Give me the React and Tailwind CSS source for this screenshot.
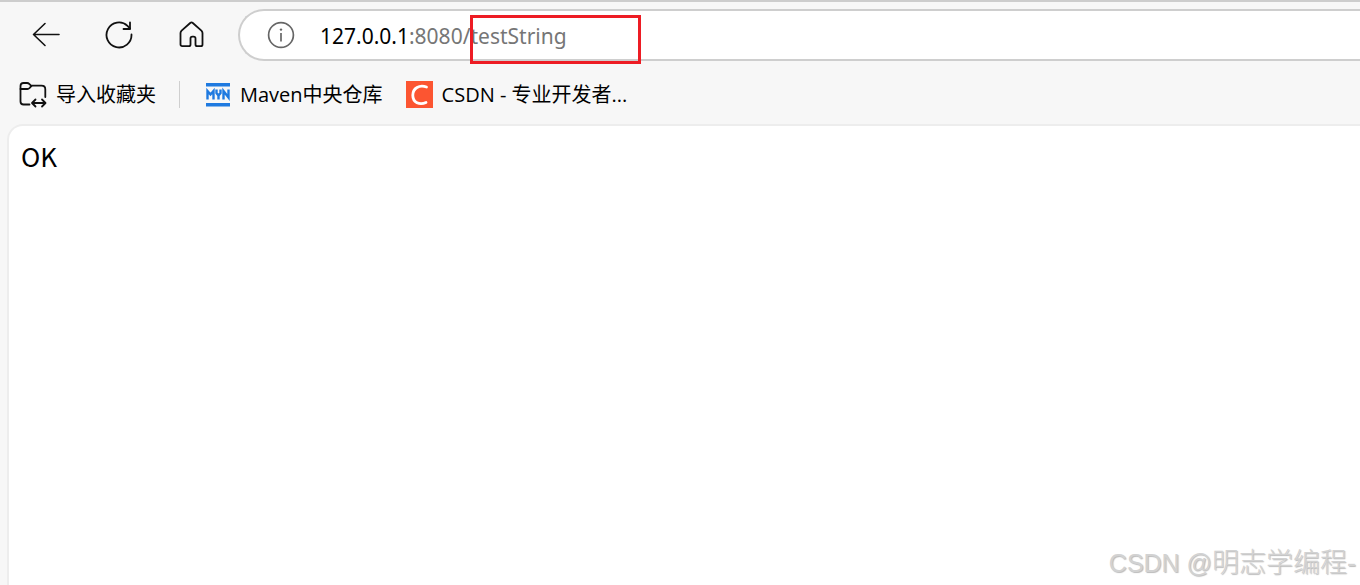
import React, { useState } from 'react';

const BackIcon = () => (
  <svg width="28" height="28" viewBox="0 0 28 28" fill="none" stroke="#111" strokeWidth="1.6" strokeLinecap="round" strokeLinejoin="round">
    <path d="M27 13.5H1.5M13 2.500L1.5 13.500L13 24.500" />
  </svg>
);

const ReloadIcon = () => (
  <svg width="28" height="28" viewBox="0 0 28 28" fill="none" stroke="#111" strokeWidth="1.8" strokeLinecap="round" strokeLinejoin="round">
    <path d="M26.500 13.500A12.500 12.500 0 1 1 22.500 4.800L25 7.500" />
    <path d="M25 1.500V8H18.500" />
  </svg>
);

const HomeIcon = () => (
  <svg width="28" height="28" viewBox="0 0 28 28" fill="none" stroke="#111" strokeWidth="1.8" strokeLinejoin="round">
    <path d="M2.500 12.100c0-1 .4-1.800 1.100-2.500l8.600-7.600c.8-.7 1.800-.7 2.600 0l8.600 7.600c.7.7 1.100 1.500 1.100 2.500V23.500c0 1-.7 1.700-1.700 1.700h-3.600c-1 0-1.700-.7-1.700-1.700v-6c0-1-.7-1.800-1.800-1.800h-1.400c-1.100 0-1.800.8-1.800 1.800v6c0 1-.7 1.700-1.700 1.700H4.200c-1 0-1.700-.7-1.700-1.700z" />
  </svg>
);

const InfoIcon = () => (
  <svg width="28" height="28" viewBox="0 0 28 28" fill="none" stroke="#666" strokeWidth="1.7">
    <circle cx="14" cy="14" r="12.4" />
    <path d="M14 12V20.5" />
    <circle cx="14" cy="8.6" r="1.2" fill="#666" stroke="none" />
  </svg>
);

const ImportIcon = () => (
  <svg width="28" height="28" viewBox="0 0 28 28" fill="none" stroke="#111" strokeWidth="1.8" strokeLinecap="round" strokeLinejoin="round">
    <path d="M10.5 23.500H4.5C2.5 23.500 1.500 22.500 1.500 20.500V5C1.500 3 2.500 2 4.500 2H8C9.200 2 9.800 2.500 10.500 3.200L12 4.700H22.500C25 4.700 26.300 6 26.300 8.200V16" />
    <path d="M1.500 8H8.500C9.500 8 10 7.600 10.700 6.900L12.500 4.900" />
    <path d="M13.500 22H26M16.500 18.500L13 22L16.500 25.500M23 18.500L26.500 22L23 25.500" />
  </svg>
);

const MavenIcon = () => (
  <svg width="26" height="26" viewBox="0 0 26 26">
    <path d="M1 1H25V4.500H1zM1 21H25V24.500H1z" fill="#1f7ae0" />
    <path d="M2.500 17.500V9L5.500 12.500L8.500 9V17.500M11.500 7.500V11L13.500 13.500L15.500 11V7.500M13.500 13V17.500M18.500 17.500V9L23.500 15.500V7.500" fill="none" stroke="#1f7ae0" strokeWidth="2.400" />
  </svg>
);

const CsdnIcon = () => (
  <svg width="27" height="27" viewBox="0 0 27 27">
    <path d="M0 0H27V27H0z" fill="#fc5531" />
    <path d="M20.500 6C13.500 3.500 6.800 7 6.800 14.200C6.800 21.500 13.500 24.500 20 21.500" fill="none" stroke="#fff" strokeWidth="2.800" strokeLinecap="round" />
  </svg>
);

const App = () => {
  const [path, setPath] = useState(':8080/testString');

  return (
    <div className="flex min-h-screen flex-col overflow-hidden border-t-2 border-[#cdcdcd] bg-[#f7f7f7] font-['Open_Sans','Noto_Sans_CJK_SC',sans-serif] text-black">
      {/* Toolbar */}
      <header className="flex items-center pt-[7px] pl-8">
        <nav className="flex shrink-0 items-center gap-[45px]">
          <button type="button" aria-label="返回"><BackIcon /></button>
          <button type="button" aria-label="刷新"><ReloadIcon /></button>
          <button type="button" aria-label="主页"><HomeIcon /></button>
        </nav>
        <div className="ml-8 flex h-[52px] min-w-0 flex-1 items-center rounded-l-full border-2 border-r-0 border-[#cecece] bg-white pl-[27px]">
          <button type="button" aria-label="网站信息"><InfoIcon /></button>
          <div className="ml-[25px] flex min-w-0 flex-1 pt-0.5 font-['Noto_Sans',sans-serif] text-[21px] leading-8">
            <label htmlFor="address">127.0.0.1</label>
            <div className="relative flex min-w-0 flex-1">
              <input
                id="address"
                className="w-full min-w-0 bg-transparent text-[#767676] outline-none"
                value={path}
                onChange={(e) => setPath(e.target.value)}
              />
              <div className="pointer-events-none absolute -top-[5px] left-[61px] h-[49px] w-[171px] border-3 border-[#ed1c24]" />
            </div>
          </div>
        </div>
      </header>

      {/* Favorites */}
      <nav className="flex h-[63px] items-center pt-1 pl-[19px] text-xl whitespace-nowrap">
        <button type="button" className="flex items-center gap-[9px]">
          <ImportIcon />
          <span>导入收藏夹</span>
        </button>
        <div className="mr-[25px] ml-[23px] h-[27px] w-px bg-[#cfcfcf]" />
        <a href="#maven" className="flex items-center gap-[9px]">
          <MavenIcon />
          <span>Maven中央仓库</span>
        </a>
        <a href="#csdn" className="ml-[23px] flex items-center gap-[9px]">
          <CsdnIcon />
          <span>CSDN - 专业开发者...</span>
        </a>
      </nav>

      {/* Page */}
      <main className="ml-[7px] flex flex-1 flex-col justify-between rounded-tl-2xl border-t-2 border-l-2 border-[#ededed] bg-white">
        <p className="px-3 pt-3 font-['Noto_Sans_CJK_SC',sans-serif] text-[26px] leading-9">OK</p>
        <p className="self-end pr-1 pb-1 font-['Liberation_Sans','Noto_Sans_CJK_SC',sans-serif] text-[25px] leading-9 font-light text-[#d2d2d2] [text-shadow:1px_1px_1px_#bbbbbb]">
          CSDN @<span className="text-[27px]">明志学编程-</span>
        </p>
      </main>
    </div>
  );
};

export default App;
